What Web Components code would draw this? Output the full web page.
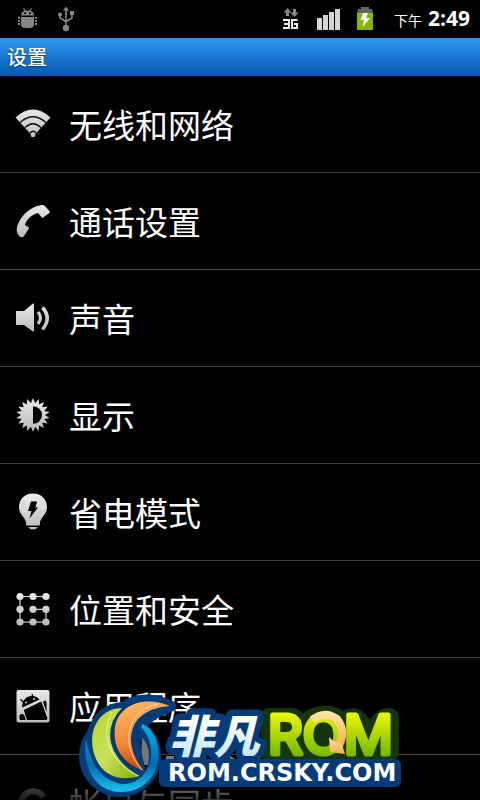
<!DOCTYPE html>
<html lang="zh-CN">
<head>
<meta charset="utf-8">
<meta name="viewport" content="width=device-width, initial-scale=1">
<title>设置</title>
<style>
    body {
        margin: 0;
        background: #000;
        color: #fff;
        font-family: "Noto Sans CJK SC", sans-serif;
    }
</style>
</head>
<body>
<settings-screen></settings-screen>
<script>
const ICONS = {
    wifi: `<path d="M15.500 19.500Q33 3.500 50.500 19.500L33 38.500Z"/>
        <g fill="none" stroke="#111" stroke-width="1.300"><path d="M20 24.500Q33 13 46 24.500M25 29.500Q33 22 41 29.500M30 35Q33 31.500 36 35"/></g>
        <circle cx="33" cy="37" r="2.300"/>`,
    phone: `<path d="M16.700 35C17.500 24 29 11.500 41.700 10Q43.500 9.800 44.500 10.700L49.500 16Q50.200 17.200 49 18.300L42.300 23L38 18C31 20 26.500 24.500 25 30L29.300 32.700L23.500 41.700Q21.500 43 19.500 41.500Q16.500 38.500 16.700 35Z"/>`,
    sound: `<path d="M16 19h8l9-7.500h1v28h-1L24 33h-8z"/>
        <g fill="none" stroke="url(#g)"><path stroke-width="3" d="M38 20Q43 25.500 38 32"/><path stroke-width="3.500" d="M42.500 15.500Q52 26 42.500 37.500"/></g>`,
    display: `<path d="${star(33, 26, 17, 12, 18)}"/><path fill="#000" d="M33 17.200a9 8.800 0 0 1 0 17.600z"/>`,
    power: `<path d="M33 7.500C24.500 7.500 19 13.500 19 21C19 28 24 30 26 36V38.500Q26 39.500 27 39.500H39Q40 39.500 40 38.500V36C42 30 47 28 47 21C47 13.500 41.500 7.500 33 7.500Z"/>
        <path d="M28 41h10q-2 2.500-5 2.500T28 41z"/><path fill="#000" d="M31 15.500h6l-1.500 6H38L29.500 32.500L31.500 25H28z"/>`,
    location: `<g fill="none" stroke="url(#g)" stroke-width="1.200"><path d="M46 13.500H20V39.200H46V26.300H33"/></g>
        ${[[20, 13.5], [33, 13.5], [46, 13.5], [20, 26.3], [33, 26.3], [46, 26.3], [20, 39], [33, 39], [46, 39]].map(([x, y]) => `<circle cx="${x}" cy="${y}" r="3.600"/>`).join('')}`,
    apps: `<rect x="16.500" y="10" width="33" height="32.500" rx="2"/>
        <g fill="#000"><path d="M22.300 27.500C21 17 33 12 39.500 19.500Z"/><path d="M23.800 30L41.300 21.500L47.300 38Q47.500 40 46 40H27Z"/>
        <path d="M43 22q2-3 3.500 0v10zM20 40q-2-5 1.500-6t4 6z"/></g>
        <path fill="none" stroke="#000" stroke-width="1.300" d="M20.500 19.500l3.500 3M32.200 14l.3 4"/>
        <circle cx="26" cy="22.500" r="1"/><circle cx="34" cy="19" r="1"/>`,
    sync: `<g fill="none" stroke="#8c8c8c" stroke-width="6"><path d="M23 33A12 12 0 0 1 43.500 20M44 30A12 12 0 0 1 23 37"/></g>`
};

const ITEMS = [
    ['wifi', '无线和网络'],
    ['phone', '通话设置'],
    ['sound', '声音'],
    ['display', '显示'],
    ['power', '省电模式'],
    ['location', '位置和安全'],
    ['apps', '应用程序'],
    ['sync', '帐户与同步']
];

function star(cx, cy, outer, inner, points) {
    let d = '';
    for (let i = 0; i < points * 2; i++) {
        const r = i % 2 ? inner : outer;
        const a = Math.PI * i / points - Math.PI / 2;
        d += (i ? 'L' : 'M') + (cx + r * Math.cos(a)).toFixed(1) + ' ' + (cy + r * Math.sin(a)).toFixed(1);
    }
    return d + 'Z';
}

class StatusBar extends HTMLElement {
    constructor() {
        super();
        this.attachShadow({ mode: 'open' });
        this.shadowRoot.innerHTML = `
            <style>
                :host {
                    display: flex;
                    align-items: center;
                    justify-content: space-between;
                    height: 38px;
                    padding: 0 10px 0 16px;
                    background: #000;
                }
                div {
                    display: flex;
                    align-items: center;
                    gap: 16px;
                }
                svg {
                    display: block;
                }
                .clock {
                    align-items: baseline;
                    gap: 6px;
                    margin-left: 4px;
                    font-size: 14px;
                    line-height: 28px;
                }
                b {
                    font-family: "Open Sans", "Noto Sans", sans-serif;
                    font-size: 21px;
                }
            </style>
            <div>
                <svg width="24" height="38" fill="#868686">
                    <path d="M5 15.500Q5 10.500 11.500 10.500T18 15.500z"/>
                    <path d="M5 17h13v7q0 4-4 4H9q-4 0-4-4z"/>
                    <path stroke="#868686" stroke-width="1.300" d="M7.500 8.500l2 3M15.500 8.500l-2 3"/>
                    <path d="M2 17h2v2H2zM2 20h2v2H2zM2 23h2v2H2zM19 17h2v2h-2zM19 20h2v2h-2zM19 23h2v2h-2z"/>
                    <path fill="#000" d="M8 12.500h2v1.500H8zM13 12.500h2v1.500h-2z"/>
                </svg>
                <svg width="24" height="38" fill="#868686">
                    <path d="M10 6.500l3 4H7z"/><circle cx="10" cy="28" r="3.200"/>
                    <circle cx="4" cy="14.500" r="2"/><path d="M14 11h4v4h-4z"/>
                    <path fill="none" stroke="#868686" stroke-width="1.600" d="M10 10v18M4 15v3l6 3.500M16 15v3l-6 3.500"/>
                </svg>
            </div>
            <div>
                <svg width="18" height="38" role="img" aria-label="3G">
                    <path fill="#888" d="M5.500 8l4 4.500H7V16H4v-3.500H1.500zM12.500 17l-4-4.500H11V9h3v3.500h2.500z"/>
                    <path fill="none" stroke="#eee" stroke-width="2" d="M1 20h6v8H1M2 24h5M15.500 20H10v8h5v-4h-3"/>
                </svg>
                <svg width="24" height="38" fill="#d5d5d5">
                    <path d="M1 18h5v12H1zM7 15h5v15H7zM13 12h5v18h-5zM19 9h5v21h-5z"/>
                </svg>
                <svg width="18" height="38">
                    <path fill="#666" d="M2 9h3V7h8v2h3l1 4H1z"/><path fill="#84b800" d="M1 13h16v17H1z"/>
                    <path fill="#fff" d="M7 13h5l-2 5h4L6.500 27l1.500-7H4.500z"/>
                </svg>
                <div class="clock"><span>下午</span><b>2:49</b></div>
            </div>
        `;
    }
}
customElements.define('status-bar', StatusBar);

class TitleBar extends HTMLElement {
    constructor() {
        super();
        this.attachShadow({ mode: 'open' });
        this.shadowRoot.innerHTML = `
            <style>
                :host {
                    display: block;
                    background: linear-gradient(#2c98ef, #0757b3);
                }
                h1 {
                    margin: 0;
                    padding: 0 7px;
                    font-size: 20px;
                    font-weight: 500;
                    line-height: 38px;
                    text-shadow: 0 1px 2px #00387a;
                }
            </style>
            <h1><slot></slot></h1>
        `;
    }
}
customElements.define('title-bar', TitleBar);

class SettingsItem extends HTMLElement {
    constructor() {
        super();
        this.attachShadow({ mode: 'open' });
    }

    connectedCallback() {
        this.shadowRoot.innerHTML = `
            <style>
                :host {
                    display: block;
                    border-bottom: 1px solid #424242;
                }
                button {
                    display: flex;
                    align-items: center;
                    gap: 3px;
                    width: 100%;
                    height: 96px;
                    padding: 0;
                    border: none;
                    background: none;
                    color: inherit;
                    font: inherit;
                    font-size: 33px;
                    text-align: left;
                }
                svg {
                    flex: none;
                }
            </style>
            <button>
                <svg width="66" height="52" fill="url(#g)" aria-hidden="true">
                    <defs><linearGradient id="g" gradientUnits="userSpaceOnUse" x1="0" y1="8" x2="0" y2="44">
                        <stop stop-color="#ececec"/><stop offset="1" stop-color="#b8b8b8"/>
                    </linearGradient></defs>
                    ${ICONS[this.getAttribute('icon')]}
                </svg>
                <span><slot></slot></span>
            </button>
        `;
    }
}
customElements.define('settings-item', SettingsItem);

class RomBadge extends HTMLElement {
    constructor() {
        super();
        this.attachShadow({ mode: 'open' });
        this.shadowRoot.innerHTML = `
            <style>
                :host {
                    display: block;
                }
                svg {
                    display: block;
                }
                .cn {
                    font: italic 900 45px "Noto Sans CJK SC", sans-serif;
                    paint-order: stroke;
                    stroke: #043b78;
                    stroke-width: 13px;
                    stroke-linejoin: round;
                }
                .rom {
                    font: 54px Inter, "Liberation Sans", sans-serif;
                    stroke-linejoin: round;
                }
                .site {
                    font: bold 24px "DejaVu Sans", sans-serif;
                }
            </style>
            <svg width="330" height="110" viewBox="75 690 330 110">
                <defs>
                    <linearGradient id="lime" x2="1" y2="1"><stop stop-color="#b4d32b"/><stop offset=".5" stop-color="#c9e25d"/><stop offset="1" stop-color="#80ad00"/></linearGradient>
                    <linearGradient id="orange" x2=".3" y2="1"><stop stop-color="#ffc26c"/><stop offset=".6" stop-color="#f4873a"/><stop offset="1" stop-color="#c84900"/></linearGradient>
                    <linearGradient id="cyan" x2="0" y2="1"><stop stop-color="#00b4e4"/><stop offset=".6" stop-color="#006cb4"/><stop offset="1" stop-color="#16c4ed"/></linearGradient>
                    <linearGradient id="ice" x2="0" y2="1"><stop offset=".3" stop-color="#fff"/><stop offset="1" stop-color="#b9dfff"/></linearGradient>
                    <linearGradient id="green" gradientUnits="userSpaceOnUse" x1="0" y1="715" x2="0" y2="757"><stop stop-color="#e5f500"/><stop offset="1" stop-color="#72b500"/></linearGradient>
                    <linearGradient id="sand" x2="0" y2="1"><stop stop-color="#ffe0a0"/><stop offset="1" stop-color="#f3ae4c"/></linearGradient>
                </defs>
                <path fill="#777" d="M142 730q11 12 7 35h-8zM166 756h8v4h-8zM229 755l6 4v6h-4zM280 752h4v9h-4z"/>
                <g fill="none" stroke="#043b78" stroke-width="12">
                    <circle cx="120" cy="756" r="35"/>
                    <path stroke-linejoin="round" fill="#043b78" d="M122 708C96 710 83 740 98 768Q112 790 138 780L140 773L135 750Q130 720 170 706Q148 697 132 703Z"/>
                </g>
                <path fill="url(#cyan)" d="M86 740C82 770 97 792 121 792C151 792 166 763 155 737Q150 727 143 724L141 727C161 748 150 785 122 784Q94 780 86 740Z"/>
                <path fill="url(#lime)" d="M122 708C96 708 84 738 98 763Q111 784 140 776Q117 764 111 743Q107 723 122 708Z"/>
                <path fill="none" stroke="#eaf5a3" d="M112 712C99 735 111 763 138 776"/>
                <path fill="url(#orange)" d="M170 706C143 695 119 705 115 727C112 750 125 764 144 771C129 751 127 733 138 719Q150 707 170 706Z"/>
                <path fill="none" stroke="#ffd7a4" d="M158 704C127 710 119 744 142 770"/>
                <path fill="#17350b" d="M270 708H290Q298 708 303 713Q312 706 325 706Q337 706 343 711Q348 708 353 708Q362 708 370 720Q378 708 387 708Q399 708 399 718V752Q399 760 391 760H269Q261 760 261 752V717Q261 708 270 708Z"/>
                <rect x="159" y="759" width="242" height="28" rx="6" fill="#043b78"/>
                <text class="cn" x="169" y="753" fill="url(#ice)">非凡</text>
                <text class="rom" x="268" y="754" fill="url(#green)" stroke="url(#green)" stroke-width="5">ROM</text>
                <path fill="none" stroke="url(#sand)" stroke-width="8" d="M312 720Q325 710 337 719Q347 732 338 747"/>
                <path fill="url(#sand)" d="M329 737l3 3 10 4 3 10-15-2z"/>
                <text class="site" x="168" y="781" fill="#fff">ROM.CRSKY.COM</text>
            </svg>
        `;
    }
}
customElements.define('rom-badge', RomBadge);

class SettingsScreen extends HTMLElement {
    constructor() {
        super();
        this.attachShadow({ mode: 'open' });
        this.shadowRoot.innerHTML = `
            <style>
                :host {
                    display: flex;
                    flex-direction: column;
                    position: relative;
                    height: 100vh;
                    overflow: hidden;
                }
                status-bar, title-bar {
                    flex: none;
                }
                main {
                    flex: 1;
                    min-height: 0;
                    overflow: hidden;
                }
                .fade {
                    position: absolute;
                    left: 0;
                    right: 0;
                    bottom: 0;
                    height: 44px;
                    background: linear-gradient(transparent, rgba(0, 0, 0, .8));
                    pointer-events: none;
                }
                rom-badge {
                    position: absolute;
                    left: 50%;
                    bottom: 0;
                    margin-left: -165px;
                }
            </style>
            <status-bar></status-bar>
            <title-bar>设置</title-bar>
            <main>
                ${ITEMS.map(([icon, text]) => `<settings-item icon="${icon}">${text}</settings-item>`).join('')}
            </main>
            <div class="fade"></div>
            <rom-badge></rom-badge>
        `;
    }
}
customElements.define('settings-screen', SettingsScreen);
</script>
</body>
</html>
